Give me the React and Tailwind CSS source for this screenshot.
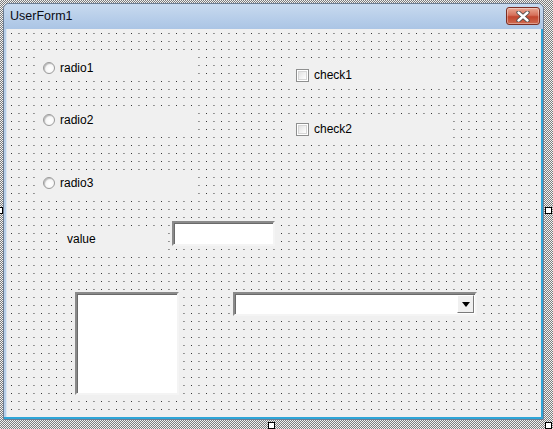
import React from "react";

const font = "font-['Liberation_Sans',Arial,sans-serif]";

function Radio({ top, label }) {
  return (
    <div
      className={`absolute left-[28px] w-[161px] h-[25px] bg-[#f0f0f0] flex items-center pl-[8px] gap-[5px] ${font} text-[12px] text-black`}
      style={{ top }}
    >
      <div className="w-[12px] h-[12px] rounded-full border border-[#9a9a9a] bg-[radial-gradient(circle_at_60%_60%,#ffffff_0%,#f7f7f7_50%,#d4d4d4_100%)] shadow-[inset_1px_1px_1px_rgba(0,0,0,0.2)]" />
      <span className="leading-none">{label}</span>
    </div>
  );
}

function Check({ top, label }) {
  return (
    <div
      className={`absolute left-[281px] w-[161px] h-[26px] bg-[#f0f0f0] flex items-center pl-[8px] gap-[5px] ${font} text-[12px] text-black`}
      style={{ top }}
    >
      <div className="w-[13px] h-[13px] border border-[#8e8f8f] bg-white p-[1px]">
        <div className="w-full h-full border border-[#d6d6d6] bg-[linear-gradient(135deg,#e2e2e2,#ffffff)]" />
      </div>
      <span className="leading-none">{label}</span>
    </div>
  );
}

const sunken =
  "border-2 border-t-[#8a8a8a] border-l-[#8a8a8a] border-r-[#f4f4f4] border-b-[#f4f4f4] bg-white shadow-[inset_1px_1px_0_#6a6a6a]";

export default function App() {
  return (
    <div className="relative w-[553px] h-[429px] overflow-hidden bg-[image:repeating-conic-gradient(#7d7d7d_0%_25%,#f2f2f2_0%_50%)] bg-[length:2px_2px] pt-[3px] pl-[3px] pr-[9px] pb-[9px]">
      <div className="w-full h-full flex flex-col border border-[#6c7d93] rounded-t-[6px] bg-[#b8cfe9] overflow-hidden">
        {/* title bar */}
        <div className="h-[25px] shrink-0 flex items-start justify-between pl-[6px] pr-[3px] pt-[3px] bg-[linear-gradient(#c8daef,#b6cde9_60%,#abc5e5)]">
          <span className={`mt-[3px] ${font} text-[12.5px] leading-none text-[#0b0b14]`}>UserForm1</span>
          <div className="w-[34px] h-[18px] rounded-[3px] border border-[#7b2d22] bg-[linear-gradient(#e9a893,#d6705a_45%,#c2452e_55%,#cf6a4f)] flex items-center justify-center shadow-[inset_0_0_0_1px_rgba(255,255,255,0.35)]">
            <svg width="14" height="11" viewBox="0 0 14 11">
              <path d="M2.5 1.5 L11.5 9.5 M11.5 1.5 L2.5 9.5" stroke="#4a4a4a" strokeWidth="4.2" strokeLinecap="round" />
              <path d="M2.5 1.5 L11.5 9.5 M11.5 1.5 L2.5 9.5" stroke="#ffffff" strokeWidth="2.4" strokeLinecap="round" />
            </svg>
          </div>
        </div>
        {/* client frame */}
        <div className="flex-1 flex pl-[2px] border-r-2 border-b-2 border-r-[#2ea6d8] border-b-[#2ea6d8]">
          <div className="relative flex-1 border-l border-l-[#dce7f3] bg-[#f0f0f0] bg-[image:conic-gradient(from_270deg_at_1px_1px,#303030_90deg,transparent_0)] bg-[length:7.5px_8px] bg-[position:4px_4px]">
            <Radio top={26} label="radio1" />
            <Radio top={78} label="radio2" />
            <Radio top={141} label="radio3" />
            <Check top={33} label="check1" />
            <Check top={87} label="check2" />

            <div className={`absolute left-[50px] top-[198px] w-[106px] h-[24px] bg-[#f0f0f0] flex items-center pl-[10px] ${font} text-[12px] text-black`}>
              <span className="leading-none">value</span>
            </div>

            <div className={`absolute left-[165px] top-[192px] w-[103px] h-[25px] ${sunken}`} />

            <div className={`absolute left-[68px] top-[263px] w-[104px] h-[103px] ${sunken}`} />

            <div className={`absolute left-[226px] top-[263px] w-[244px] h-[24px] ${sunken} flex justify-end p-[1px]`}>
              <div className="w-[17px] h-full bg-[#f0f0f0] border border-t-[#ffffff] border-l-[#ffffff] border-r-[#7a7a7a] border-b-[#7a7a7a] flex items-center justify-center">
                <svg width="8" height="5" viewBox="0 0 8 5">
                  <path d="M0 0 H8 L4 5 Z" fill="#000" />
                </svg>
              </div>
            </div>
          </div>
        </div>
      </div>

      {/* sizing handles */}
      <div className="absolute left-[-4px] top-[207px] w-[7px] h-[7px] bg-white border border-black" />
      <div className="absolute left-[545px] top-[207px] w-[7px] h-[7px] bg-white border border-black" />
      <div className="absolute left-[268px] top-[422px] w-[7px] h-[7px] bg-white border border-black" />
      <div className="absolute left-[545px] top-[422px] w-[7px] h-[7px] bg-white border border-black" />
    </div>
  );
}
